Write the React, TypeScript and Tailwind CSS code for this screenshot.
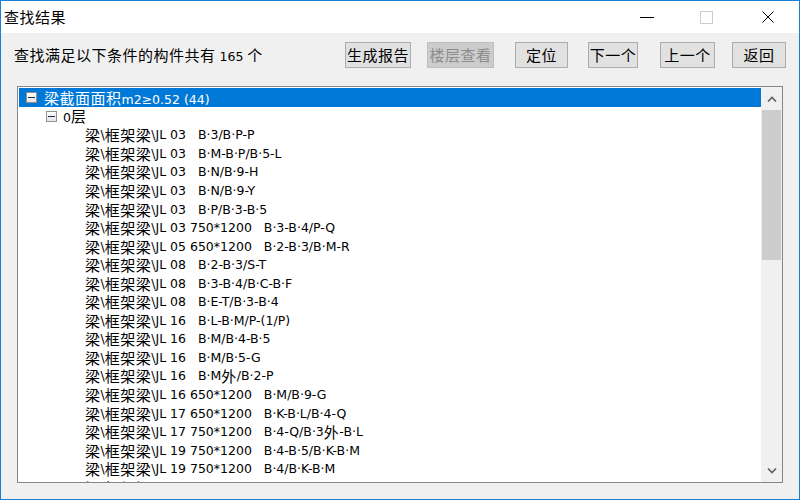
import React from "react";

const CJK = /([\u3000-\u303f\u4e00-\u9fff\uff00-\uffef]+)/;

function Mixed({ text }: { text: string }) {
  const parts = text.split(CJK).filter(p => p !== "");
  return (
    <>
      {parts.map((p, i) =>
        CJK.test(p) ? (
          <span key={i} className="inline-block text-[15px] leading-[17px] tracking-[0.5px] font-['Noto_Sans_CJK_SC',sans-serif]">{p}</span>
        ) : (
          <span key={i} className="inline-block text-[12.5px] leading-[17px] font-['DejaVu_Sans','Noto_Sans_CJK_SC',sans-serif]">{p}</span>
        )
      )}
    </>
  );
}

const rows = [
  "梁\\框架梁\\JL 03   B·3/B·P-P",
  "梁\\框架梁\\JL 03   B·M-B·P/B·5-L",
  "梁\\框架梁\\JL 03   B·N/B·9-H",
  "梁\\框架梁\\JL 03   B·N/B·9-Y",
  "梁\\框架梁\\JL 03   B·P/B·3-B·5",
  "梁\\框架梁\\JL 03 750*1200   B·3-B·4/P-Q",
  "梁\\框架梁\\JL 05 650*1200   B·2-B·3/B·M-R",
  "梁\\框架梁\\JL 08   B·2-B·3/S-T",
  "梁\\框架梁\\JL 08   B·3-B·4/B·C-B·F",
  "梁\\框架梁\\JL 08   B·E-T/B·3-B·4",
  "梁\\框架梁\\JL 16   B·L-B·M/P-(1/P)",
  "梁\\框架梁\\JL 16   B·M/B·4-B·5",
  "梁\\框架梁\\JL 16   B·M/B·5-G",
  "梁\\框架梁\\JL 16   B·M外/B·2-P",
  "梁\\框架梁\\JL 16 650*1200   B·M/B·9-G",
  "梁\\框架梁\\JL 17 650*1200   B·K-B·L/B·4-Q",
  "梁\\框架梁\\JL 17 750*1200   B·4-Q/B·3外-B·L",
  "梁\\框架梁\\JL 19 750*1200   B·4-B·5/B·K-B·M",
  "梁\\框架梁\\JL 19 750*1200   B·4/B·K-B·M",
  "梁\\框架梁\\JL 19 750*1200   B·4/B·K-B·M",
];

const buttons = [
  { label: "生成报告", cls: "w-[66px] ml-0" },
  { label: "楼层查看", cls: "w-[67px] ml-[16px]", disabled: true },
  { label: "定位", cls: "w-[53px] ml-[21px]" },
  { label: "下一个", cls: "w-[50px] ml-[20px]" },
  { label: "上一个", cls: "w-[55px] ml-[22px]" },
  { label: "返回", cls: "w-[54px] ml-[17px]" },
];

function Minus() {
  return (
    <span className="w-[11px] h-[11px] border border-[#919191] bg-gradient-to-b from-white to-[#e4e4e4] flex items-center justify-center shrink-0">
      <span className="w-[7px] h-px bg-[#1f2a44]" />
    </span>
  );
}

export default function App() {
  return (
    <div className="w-[800px] h-[500px] border border-[#1c7fd6] bg-[#f0f0f0] flex flex-col overflow-hidden text-black">
      <div className="h-[32px] bg-white flex items-center shrink-0">
        <span className="ml-[3px] text-[15px] tracking-[0.5px] font-['Noto_Sans_CJK_SC',sans-serif]">查找结果</span>
        <div className="ml-auto flex items-center h-full">
          <span className="w-[14px] h-px bg-black mr-[46px]" />
          <span className="w-[13px] h-[13px] border border-[#cccccc] mr-[49px]" />
          <svg width="12" height="12" viewBox="0 0 12 12" className="mr-[25px]">
            <path d="M0.5 0.5 L11.5 11.5 M11.5 0.5 L0.5 11.5" stroke="#000" strokeWidth="1" />
          </svg>
        </div>
      </div>

      <div className="flex items-center pt-[9px] h-[35px] shrink-0">
        <span className="ml-[13px] w-[331px] whitespace-pre">
          <Mixed text="查找满足以下条件的构件共有 165 个" />
        </span>
        {buttons.map(b => (
          <div
            key={b.label}
            className={`${b.cls} h-[26px] flex items-center justify-center border ${
              b.disabled ? "bg-[#cccccc] border-[#bfbfbf] text-[#8d8d8d]" : "bg-[#e1e1e1] border-[#adadad]"
            } text-[15px] tracking-[0.5px] font-['Noto_Sans_CJK_SC',sans-serif]`}
          >
            {b.label}
          </div>
        ))}
      </div>

      <div className="ml-[16px] mt-[18px] w-[766px] h-[397px] border border-[#828790] bg-white flex">
        <div className="flex-1 overflow-hidden pt-px pl-px">
          <div className="h-[19px] bg-[#0078d7] text-white flex items-center">
            <span className="ml-[7px]"><Minus /></span>
            <span className="ml-[7px] whitespace-pre"><Mixed text="梁截面面积m2≥0.52 (44)" /></span>
          </div>
          <div className="h-[18.55px] flex items-center">
            <span className="ml-[27px]"><Minus /></span>
            <span className="ml-[6px] whitespace-pre"><Mixed text="0层" /></span>
          </div>
          {rows.map((r, i) => (
            <div key={i} className="h-[18.55px] flex items-center pl-[66px] whitespace-pre">
              <Mixed text={r} />
            </div>
          ))}
        </div>
        <div className="w-[21px] bg-[#f0f0f0] flex flex-col shrink-0">
          <div className="h-[23px] flex items-center justify-center">
            <svg width="10" height="6" viewBox="0 0 10 6">
              <path d="M1 5.5 L5 1.5 L9 5.5" fill="none" stroke="#606060" strokeWidth="1.6" />
            </svg>
          </div>
          <div className="h-[150px] bg-[#cdcdcd] mx-px" />
          <div className="flex-1" />
          <div className="h-[23px] flex items-center justify-center">
            <svg width="10" height="6" viewBox="0 0 10 6">
              <path d="M1 0.5 L5 4.5 L9 0.5" fill="none" stroke="#606060" strokeWidth="1.6" />
            </svg>
          </div>
        </div>
      </div>
    </div>
  );
}
